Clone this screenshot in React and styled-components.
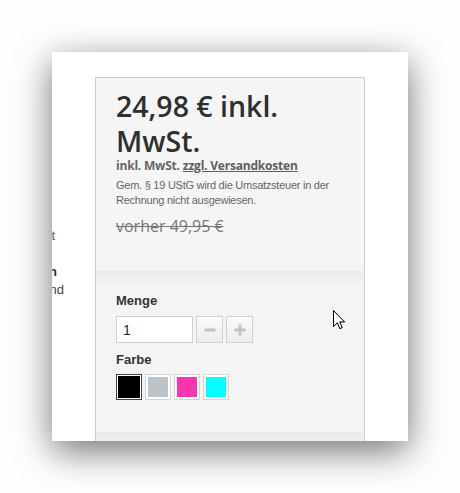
import React from "react";
import styled, { createGlobalStyle } from "styled-components";

const Global = createGlobalStyle`
  html, body { margin: 0; padding: 0; background: #ffffff; }
  body { font-family: Arial, "Liberation Sans", sans-serif; }
`;

const Page = styled.div`
  position: relative;
  width: 460px;
  height: 493px;
  padding: 52px;
  box-sizing: border-box;
  background: #fefefe;
`;

const Card = styled.div`
  width: 356px;
  height: 389px;
  background: #ffffff;
  box-shadow: 0 10px 34px rgba(0, 0, 0, 0.55);
  overflow: hidden;
  display: flex;
`;

const LeftCol = styled.div`
  width: 43px;
  flex: none;
  overflow: hidden;
  padding-top: 175px;
  box-sizing: border-box;
  font-family: "Liberation Sans", Arial, sans-serif;
  font-size: 13px;
  line-height: 18px;
`;

const Frag = styled.div`
  width: 200px;
  margin-left: ${(p) => p.$end - 200}px;
  margin-top: ${(p) => p.$gap || 0}px;
  text-align: right;
  white-space: nowrap;
  color: ${(p) => p.$color};
  font-weight: ${(p) => (p.$bold ? 700 : 400)};
`;

const Panel = styled.div`
  width: 270px;
  flex: none;
  margin-top: 25px;
  border: 1px solid #cfcfcf;
  border-bottom: none;
  box-sizing: border-box;
  background: #f5f5f5;
  display: flex;
  flex-direction: column;
`;

const PriceSection = styled.div`
  padding: 11px 20px 34px;
`;

const Price = styled.div`
  font-family: "Open Sans", sans-serif;
  font-weight: 600;
  font-size: 28.5px;
  line-height: 35px;
  color: #2f2f2f;
`;

const TaxLine = styled.div`
  font-family: "Open Sans", sans-serif;
  font-weight: 700;
  font-size: 12px;
  letter-spacing: -0.2px;
  line-height: 14px;
  color: #666;
`;

const TaxLink = styled.span`
  text-decoration: underline;
  color: #5e5e5e;
`;

const Note = styled.div`
  margin-top: 5px;
  font-family: Arial, "Liberation Sans", sans-serif;
  font-size: 11px;
  letter-spacing: -0.25px;
  line-height: 15px;
  color: #666;
`;

const OldPrice = styled.div`
  margin-top: 7px;
  font-family: "Open Sans", sans-serif;
  font-size: 16px;
  line-height: 22px;
  color: #777;
  text-decoration: line-through;
`;

const OptionSection = styled.div`
  padding: 22px 20px ${(p) => p.$pb}px;
  background: linear-gradient(#ebebeb 0px, #ededed 5px, #f4f4f4 13px, #f4f4f4 100%);
  flex: ${(p) => (p.$grow ? 1 : "none")};
`;

const Label = styled.div`
  font-family: Arial, "Liberation Sans", sans-serif;
  font-weight: 700;
  font-size: 13px;
  line-height: 16px;
  color: #333;
  margin-top: ${(p) => p.$mt || 0}px;
`;

const QtyRow = styled.div`
  display: flex;
  gap: 3px;
  margin-top: 7px;
`;

const QtyInput = styled.div`
  width: 77px;
  height: 27px;
  box-sizing: border-box;
  border: 1px solid #d2d2d2;
  background: #fff;
  padding-left: 6px;
  display: flex;
  align-items: center;
  font-family: Arial, "Liberation Sans", sans-serif;
  font-size: 14px;
  color: #1c1c40;
`;

const QtyButton = styled.div`
  width: 27px;
  height: 27px;
  box-sizing: border-box;
  border: 1px solid #d0d0d0;
  background: linear-gradient(#fbfbfb, #ececec);
  display: flex;
  align-items: center;
  justify-content: center;
`;

const Swatches = styled.div`
  display: flex;
  gap: 3px;
  margin-top: 6px;
`;

const Swatch = styled.div`
  width: 26px;
  height: 26px;
  box-sizing: border-box;
  border: 1px solid ${(p) => (p.$active ? "#444" : "#d4d4d4")};
  padding: ${(p) => (p.$active ? 1 : 2)}px;
  background: #fff;
  &::after {
    content: "";
    display: block;
    width: 100%;
    height: 100%;
    background: ${(p) => p.$color};
  }
`;

const Side = styled.div`
  flex: 1;
`;

const Cursor = styled.svg`
  position: absolute;
  left: 333px;
  top: 310px;
  filter: drop-shadow(0.5px 0.5px 0.5px rgba(0, 0, 0, 0.35));
`;

const Minus = () => (
  <svg width="12" height="12" viewBox="0 0 12 12">
    <rect x="0.5" y="4.5" width="11" height="3" fill="#c2c2c2" />
  </svg>
);

const Plus = () => (
  <svg width="12" height="12" viewBox="0 0 12 12">
    <rect x="0.5" y="4.5" width="11" height="3" fill="#c2c2c2" />
    <rect x="4.5" y="0.5" width="3" height="11" fill="#c2c2c2" />
  </svg>
);

export default function App() {
  const colors = ["#000000", "#bcc4ca", "#f637b0", "#00ffff"];
  return (
    <>
      <Global />
      <Page>
        <Card>
          <LeftCol>
            <Frag $end={3} $color="#5e4f98">Lieferzeit</Frag>
            <Frag $end={5} $gap={18} $color="#333" $bold>Versandinformation</Frag>
            <Frag $end={12} $color="#444">Deutschland</Frag>
          </LeftCol>
          <Panel>
            <PriceSection>
              <Price>24,98 € inkl. MwSt.</Price>
              <TaxLine>
                inkl. MwSt. <TaxLink>zzgl. Versandkosten</TaxLink>
              </TaxLine>
              <Note>Gem. § 19 UStG wird die Umsatzsteuer in der Rechnung nicht ausgewiesen.</Note>
              <OldPrice>vorher 49,95 €</OldPrice>
            </PriceSection>
            <OptionSection $pb={32}>
              <Label>Menge</Label>
              <QtyRow>
                <QtyInput>1</QtyInput>
                <QtyButton><Minus /></QtyButton>
                <QtyButton><Plus /></QtyButton>
              </QtyRow>
              <Label $mt={9}>Farbe</Label>
              <Swatches>
                {colors.map((c, i) => (
                  <Swatch key={c} $color={c} $active={i === 0} />
                ))}
              </Swatches>
            </OptionSection>
            <OptionSection $pb={0} $grow />
          </Panel>
          <Side />
        </Card>
        <Cursor width="13" height="20" viewBox="0 0 13 20">
          <path
            d="M0.5 0.5 L0.5 16.5 L4.3 12.8 L6.8 18.6 L9.2 17.6 L6.7 11.9 L11.5 11.9 Z"
            fill="#fff"
            stroke="#000"
            strokeWidth="1"
            strokeLinejoin="miter"
          />
        </Cursor>
      </Page>
    </>
  );
}
